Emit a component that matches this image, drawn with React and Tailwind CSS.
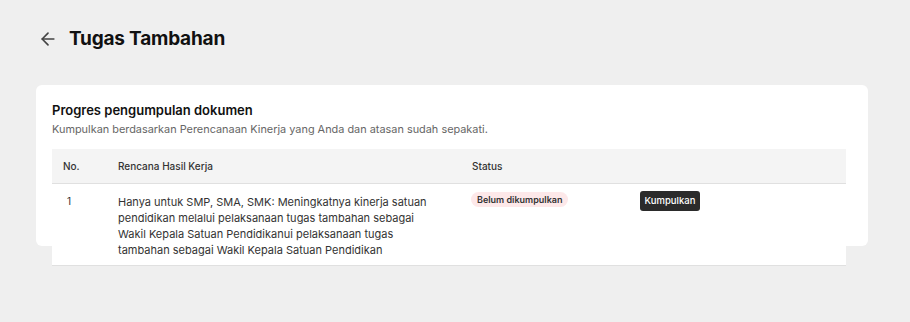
export default function App() {
  return (
    <div className="w-[910px] h-[322px] bg-[#efefef] overflow-hidden" style={{ fontFamily: "Inter, 'Noto Sans', sans-serif" }}>
      <div className="flex items-center h-[20px] mt-[29px] ml-[38px] gap-[11px]">
        <svg width="20" height="20" viewBox="0 0 24 24" fill="none" stroke="#444" strokeWidth="2" strokeLinecap="round" strokeLinejoin="round">
          <path d="M19 12H5" />
          <path d="M12 19l-7-7 7-7" />
        </svg>
        <h1 className="text-[19px] font-bold text-[#111] leading-[20px] tracking-[-0.2px]">Tugas Tambahan</h1>
      </div>
      <div className="mt-[36px] ml-[36px] w-[832px] h-[161px] bg-white rounded-[6px] pt-[17px] pl-[16px]">
        <div className="text-[13px] font-semibold text-[#111] leading-[16px]">Progres pengumpulan dokumen</div>
        <div className="text-[10.9px] text-[#666] leading-[14px] mt-[4px]">Kumpulkan berdasarkan Perencanaan Kinerja yang Anda dan atasan sudah sepakati.</div>
        <div className="mt-[13px] w-[794px] bg-white">
          <div className="flex h-[35px] items-center bg-[#f4f4f4] border-b border-[#e0e0e0] text-[10px] font-medium text-[#333]">
            <div className="w-[55px] pl-[11px]">No.</div>
            <div className="w-[354px] pl-[11px]">Rencana Hasil Kerja</div>
            <div className="w-[168px] pl-[11px]">Status</div>
            <div className="flex-1"></div>
          </div>
          <div className="flex items-start border-b border-[#e0e0e0] pt-[8px] pb-[7px]">
            <div className="w-[55px] pl-[15px] text-[10px] text-[#333] leading-[16px] pt-[1px]">1</div>
            <div className="w-[354px] pl-[11px] pr-[28px] text-[11px] text-[#333] leading-[16px] pt-[2px]">
              Hanya untuk SMP, SMA, SMK: Meningkatnya kinerja satuan pendidikan melalui pelaksanaan tugas tambahan sebagai Wakil Kepala Satuan Pendidikanui pelaksanaan tugas tambahan sebagai Wakil Kepala Satuan Pendidikan
            </div>
            <div className="w-[168px] pl-[10px] flex">
              <span className="inline-flex items-center h-[15px] px-[6px] rounded-full bg-[#fde8e9] text-[9px] font-semibold text-[#333] leading-none">Belum dikumpulkan</span>
            </div>
            <div className="flex-1 pl-[11px] flex">
              <button className="h-[20px] w-[60px] rounded-[3px] bg-[#2b2b2b] text-white text-[9.5px] font-medium leading-none mt-[-1px]">Kumpulkan</button>
            </div>
          </div>
        </div>
      </div>
    </div>
  );
}
